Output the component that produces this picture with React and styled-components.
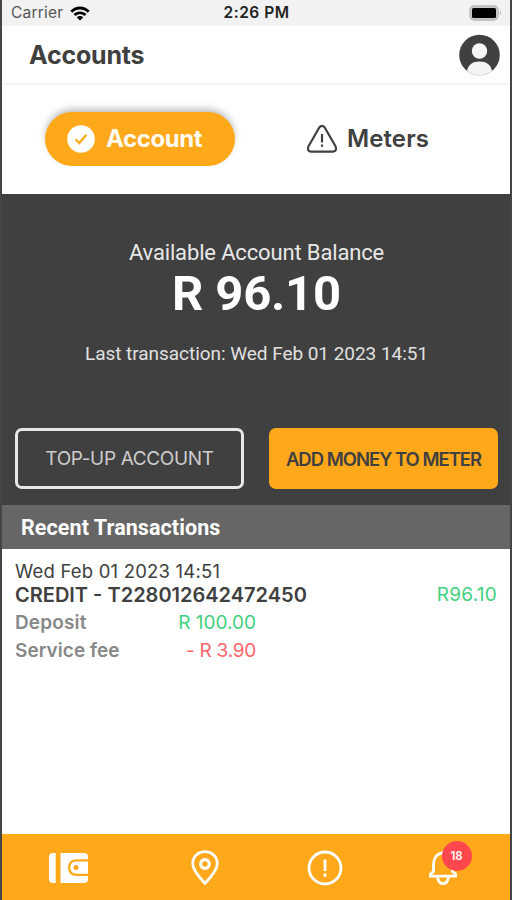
import React from "react";
import styled, { createGlobalStyle } from "styled-components";

const AMBER = "#ffa91a";
const CHARCOAL = "#404040";
const INTER = 'Inter, "Liberation Sans", sans-serif';
const ROBOTO = 'Roboto, "Liberation Sans", sans-serif';

const GlobalStyle = createGlobalStyle`
  * { box-sizing: border-box; }
  html, body { margin: 0; padding: 0; background: #fff; }
  button { font: inherit; border: 0; padding: 0; margin: 0; background: none; }
  svg { display: block; flex: none; }
`;

const Screen = styled.div`
  width: 512px;
  height: 900px;
  display: flex;
  flex-direction: column;
  overflow: hidden;
  background: #fff;
  border-left: 2px solid #454545;
  border-right: 2px solid #454545;
  font-family: ${INTER};
`;

const Text = styled.span`
  display: block;
  white-space: pre;
  font-family: ${(p) => (p.$roboto ? ROBOTO : INTER)};
  font-size: ${(p) => p.$size}px;
  font-weight: ${(p) => p.$weight || 400};
  letter-spacing: ${(p) => p.$spacing || 0}px;
  line-height: ${(p) => p.$line || 24}px;
  color: ${(p) => p.$color || CHARCOAL};
`;

const StatusBar = styled.div`
  height: 26px;
  flex: none;
  display: grid;
  grid-template-columns: 1fr auto 1fr;
  align-items: center;
  padding: 0 8px 0 9px;
  background: #f2f2f2;
`;

const Carrier = styled.div`
  display: flex;
  align-items: center;
  gap: 7px;
`;

const BatterySlot = styled.div`
  display: flex;
  justify-content: flex-end;
`;

const Header = styled.header`
  height: 59px;
  flex: none;
  display: flex;
  align-items: center;
  justify-content: space-between;
  padding: 0 10px 0 27px;
  border-bottom: 2px solid #f4f4f4;
`;

const Tabs = styled.div`
  height: 109px;
  flex: none;
  display: flex;
  align-items: center;
  padding: 0 0 2px 43px;
`;

const Tab = styled.button`
  height: 54px;
  width: 190px;
  border-radius: 27px;
  display: flex;
  align-items: center;
  padding: 1px 0 0 22px;
  gap: 11px;
  background: ${(p) => (p.$active ? AMBER : "transparent")};
  box-shadow: ${(p) => (p.$active ? "0 -4px 7px -1px rgba(60, 60, 70, 0.34)" : "none")};
  & + & { margin-left: 49px; gap: 9px; }
`;

const Balance = styled.section`
  height: 311px;
  flex: none;
  display: flex;
  flex-direction: column;
  align-items: center;
  padding: 47px 12px 0 13px;
  background: ${CHARCOAL};
`;

const Actions = styled.div`
  width: 100%;
  display: flex;
  justify-content: space-between;
  margin-top: 43px;
`;

const Action = styled.button`
  width: 229px;
  height: 61px;
  border-radius: 7px;
  display: flex;
  align-items: center;
  justify-content: center;
  padding-top: 1px;
  border: ${(p) => (p.$filled ? "0" : "3px solid #e8e8e8")};
  background: ${(p) => (p.$filled ? AMBER : "transparent")};
`;

const SectionTitle = styled.div`
  height: 44px;
  flex: none;
  display: flex;
  align-items: center;
  padding: 1px 0 0 19px;
  background: #666;
`;

const List = styled.div`
  flex: 1;
  padding: 10px 13px 0;
`;

const Row = styled.div`
  display: flex;
  justify-content: space-between;
  height: ${(p) => p.$height}px;
  width: ${(p) => (p.$width ? p.$width + "px" : "100%")};
`;

const NavBar = styled.nav`
  height: 66px;
  flex: none;
  display: flex;
  align-items: center;
  background: ${AMBER};
  padding: 2px 0 0 7px;
`;

const NavItem = styled.button`
  width: ${(p) => p.$width}px;
  flex: none;
  display: flex;
  justify-content: center;
`;

const BadgeAnchor = styled.div`
  position: relative;
`;

const Badge = styled.div`
  position: absolute;
  left: 13px;
  top: -9px;
  width: 30px;
  height: 30px;
  border-radius: 50%;
  background: #ff474d;
  display: flex;
  align-items: center;
  justify-content: center;
`;

const Wifi = () => (
  <svg width="20" height="15" viewBox="0 0 20 15">
    <path d="M.3 4.8C5.700-.9 14.300-.9 19.700 4.800L17.700 6.800C13.400 2.500 6.600 2.500 2.300 6.800Z" />
    <path d="M3.500 8.100C7.100 4.500 12.900 4.500 16.500 8.100L14.500 10.100C12 7.700 8 7.700 5.500 10.100Z" />
    <path d="M6.800 11.300C8.600 9.700 11.400 9.700 13.200 11.300L10 14.600Z" />
  </svg>
);

const Battery = () => (
  <svg width="33" height="16" viewBox="0 0 33 16">
    <rect x="1" y="1" width="28" height="14" rx="4" fill="#c8c8c8" stroke="#bbb" strokeWidth="1.500" />
    <rect x="3" y="3" width="24" height="10" rx="1.500" fill="#000" />
    <path d="M31 5.500Q33 8 31 10.500Z" fill="#aaa" />
  </svg>
);

const Avatar = () => (
  <svg width="41" height="42" viewBox="0 0 41 42">
    <defs>
      <clipPath id="avatar-disc"><circle cx="20.500" cy="21" r="20.300" /></clipPath>
    </defs>
    <g clipPath="url(#avatar-disc)">
      <rect width="41" height="42" fill={CHARCOAL} />
      <circle cx="20.500" cy="17" r="7.700" fill="#f6f6f6" />
      <path d="M7.500 42C7.500 32 12 27.500 20.500 27.500S33.500 32 33.500 42Z" fill="#f3f3f3" />
    </g>
  </svg>
);

const CheckDisc = () => (
  <svg width="28" height="28" viewBox="0 0 28 28">
    <circle cx="14" cy="14" r="13.800" fill="#fff" />
    <path d="M8.500 14.300L12.300 18L19.300 9.800" fill="none" stroke={AMBER} strokeWidth="2.300" />
  </svg>
);

const Warning = () => (
  <svg width="32" height="30" viewBox="0 0 32 30" fill="none" stroke={CHARCOAL}>
    <path
      d="M13.300 3.500Q16 .2 18.700 3.500L29.500 22.200Q31.400 27.200 27 27.700H5Q.6 27.200 2.500 22.200Z"
      strokeWidth="2.200"
      strokeLinejoin="round"
    />
    <path d="M16 10V18.500M16 20.500V22.800" strokeWidth="2.200" />
  </svg>
);

const Wallet = () => (
  <svg width="39" height="30" viewBox="0 0 39 30" fill="#fff">
    <path d="M4 0H6.700V30H4Q0 30 0 26V4Q0 0 4 0Z" />
    <path d="M11.500 0H35Q39 0 39 4V6.300H28Q19 6.300 19 14.700T28 23H39V26Q39 30 35 30H11.500Z" />
    <path fillRule="evenodd" d="M27.500 8.600H39V20.700H27.500Q21.300 20.700 21.300 14.600T27.500 8.600ZM27 12.100A2.500 2.500 0 1 0 27 17.100A2.500 2.500 0 1 0 27 12.100Z" />
  </svg>
);

const Pin = () => (
  <svg width="28" height="36" viewBox="0 0 28 36" fill="none" stroke="#fff" strokeWidth="2.800">
    <path d="M14 33.300C9.500 28.500 1.700 20.500 1.700 13.700C1.700 6.500 7.200 1.700 14 1.700S26.300 6.500 26.300 13.700C26.300 20.500 18.500 28.500 14 33.300Z" />
    <circle cx="14" cy="14" r="4.300" strokeWidth="3.200" />
  </svg>
);

const Alert = () => (
  <svg width="36" height="36" viewBox="0 0 36 36" fill="none" stroke="#fff" strokeWidth="2.800">
    <circle cx="18" cy="18" r="16" />
    <path d="M18 9.500V21M18 23.500V26.800" />
  </svg>
);

const Bell = () => (
  <svg width="28" height="36" viewBox="0 0 28 36" fill="none" stroke="#fff" strokeWidth="2.800">
    <path d="M14 1V3.200C8 3.200 4.500 8 4.500 14V21.500L1.500 24V26.200H26.500V24L23.500 21.500V14C23.500 8 20 3.200 14 3.200" />
    <path d="M8.500 26.500C9 32 11 33.700 14 33.700S19 32 19.500 26.500" />
  </svg>
);

export default function App() {
  return (
    <>
      <GlobalStyle />
      <Screen>
        <StatusBar>
          <Carrier>
            <Text $size={15.5} $spacing={0.2} $color="#555">Carrier</Text>
            <Wifi />
          </Carrier>
          <Text $size={15.5} $weight={600} $spacing={0.5} $color="#222">2:26 PM</Text>
          <BatterySlot><Battery /></BatterySlot>
        </StatusBar>
        <Header>
          <Text $size={25} $weight={700} $spacing={-0.2} $line={30}>Accounts</Text>
          <Avatar />
        </Header>
        <Tabs>
          <Tab $active>
            <CheckDisc />
            <Text $size={24} $weight={700} $spacing={-0.4} $color="#fffaf0">Account</Text>
          </Tab>
          <Tab>
            <Warning />
            <Text $size={24} $weight={600} $spacing={0.1}>Meters</Text>
          </Tab>
        </Tabs>
        <Balance>
          <Text $roboto $size={22} $spacing={-0.15} $color="#e8e8e8">Available Account Balance</Text>
          <Text $roboto $size={49} $weight={700} $spacing={-0.2} $line={58} $color="#fff">R 96.10</Text>
          <Text $roboto $size={19} $spacing={-0.04} $line={62} $color="#e0e0e0">Last transaction: Wed Feb 01 2023 14:51</Text>
          <Actions>
            <Action><Text $size={19} $spacing={-0.35} $color="#ccc">TOP-UP ACCOUNT</Text></Action>
            <Action $filled><Text $size={18.5} $weight={600} $spacing={-1.02}>ADD MONEY TO METER</Text></Action>
          </Actions>
        </Balance>
        <SectionTitle>
          <Text $roboto $size={21.5} $weight={700} $spacing={0.08} $color="#fff">Recent Transactions</Text>
        </SectionTitle>
        <List>
          <Row $height={24}>
            <Text $size={18.5} $spacing={0.2}>Wed Feb 01 2023 14:51</Text>
          </Row>
          <Row $height={28}>
            <Text $size={20} $weight={600}>CREDIT - T228012642472450</Text>
            <Text $size={19} $spacing={0.25} $color="#43d080">R96.10</Text>
          </Row>
          <Row $height={28} $width={241}>
            <Text $size={19} $weight={600} $spacing={0.15} $color="#888">Deposit</Text>
            <Text $size={19} $color="#43d080">R 100.00</Text>
          </Row>
          <Row $height={28} $width={241}>
            <Text $size={19} $weight={600} $spacing={0.05} $color="#888">Service fee</Text>
            <Text $size={19} $spacing={-0.25} $color="#ff666b">- R 3.90</Text>
          </Row>
        </List>
        <NavBar>
          <NavItem $width={119}><Wallet /></NavItem>
          <NavItem $width={153}><Pin /></NavItem>
          <NavItem $width={87}><Alert /></NavItem>
          <NavItem $width={149}>
            <BadgeAnchor>
              <Bell />
              <Badge><Text $size={11.5} $weight={600} $line={14} $color="#fff">18</Text></Badge>
            </BadgeAnchor>
          </NavItem>
        </NavBar>
      </Screen>
    </>
  );
}
